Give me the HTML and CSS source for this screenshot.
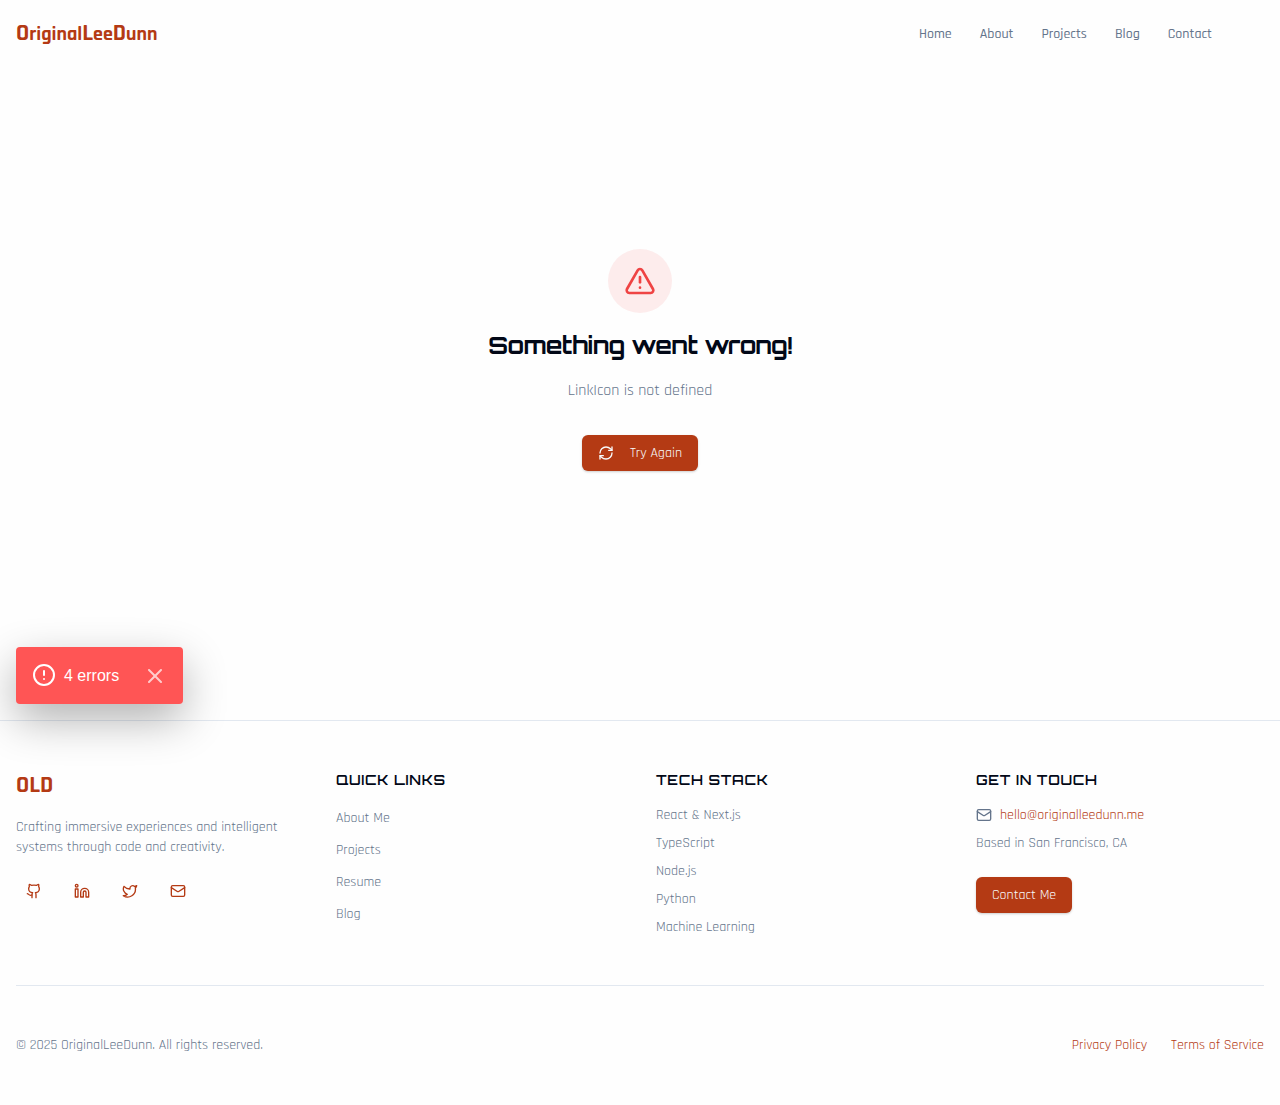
FILE: index.html
```html
<!DOCTYPE html>
<html lang="en">
<head>
<meta charset="utf-8">
<title>OriginalLeeDunn</title>
<link rel="stylesheet" href="styles.css">
</head>
<body>
<header class="header">
  <a class="logo"><span class="cap">O</span>riginal<span class="cap">L</span>ee<span class="cap">D</span>unn</a>
  <nav class="nav"><a>Home</a><a>About</a><a>Projects</a><a>Blog</a><a>Contact</a></nav>
</header>

<main class="error">
  <div class="error-badge">
    <svg class="icon icon-lg" viewBox="0 0 24 24"><path d="m21.73 18-8-14a2 2 0 0 0-3.48 0l-8 14A2 2 0 0 0 4 21h16a2 2 0 0 0 1.73-3"/><path d="M12 9v4"/><path d="M12 17h.01"/></svg>
  </div>
  <h1 class="error-title">Something went wrong!</h1>
  <p class="error-message">LinkIcon is not defined</p>
  <button class="button retry">
    <svg class="icon" viewBox="0 0 24 24"><path d="M3 12a9 9 0 0 1 9-9 9.75 9.75 0 0 1 6.74 2.74L21 8"/><path d="M21 3v5h-5"/><path d="M21 12a9 9 0 0 1-9 9 9.75 9.75 0 0 1-6.74-2.74L3 16"/><path d="M8 16H3v5"/></svg>
    <span>Try Again</span>
  </button>
</main>

<footer class="footer">
  <div class="columns">
    <section>
      <div class="brand">OLD</div>
      <p class="blurb">Crafting immersive experiences and intelligent systems through code and creativity.</p>
      <div class="social">
        <a><svg class="icon" viewBox="0 0 24 24"><path d="M15 22v-4a4.8 4.8 0 0 0-1-3.5c3 0 6-2 6-5.5.08-1.25-.27-2.48-1-3.5.28-1.15.28-2.35 0-3.5 0 0-1 0-3 1.5-2.64-.5-5.36-.5-8 0C6 2 5 2 5 2c-.3 1.15-.3 2.35 0 3.5A5.403 5.403 0 0 0 4 9c0 3.5 3 5.5 6 5.5-.39.49-.68 1.05-.85 1.65-.17.6-.22 1.23-.15 1.85v4"/><path d="M9 18c-4.51 2-5-2-7-2"/></svg></a>
        <a><svg class="icon" viewBox="0 0 24 24"><path d="M16 8a6 6 0 0 1 6 6v7h-4v-7a2 2 0 0 0-4 0v7h-4v-7a6 6 0 0 1 6-6z"/><rect width="4" height="12" x="2" y="9"/><circle cx="4" cy="4" r="2"/></svg></a>
        <a><svg class="icon" viewBox="0 0 24 24"><path d="M22 4s-.7 2.1-2 3.4c1.6 10-9.4 17.3-18 11.6 2.2.1 4.4-.6 6-2C3 15.5.5 9.6 3 5c2.2 2.6 5.6 4.1 9 4-.9-4.2 4-6.6 7-3.8 1.1 0 3-1.2 3-1.2z"/></svg></a>
        <a><svg class="icon" viewBox="0 0 24 24"><rect width="20" height="16" x="2" y="4" rx="2"/><path d="m22 7-8.97 5.7a1.94 1.94 0 0 1-2.06 0L2 7"/></svg></a>
      </div>
    </section>
    <section>
      <h2 class="heading">QUICK LINKS</h2>
      <ul class="list links"><li>About Me</li><li>Projects</li><li>Resume</li><li>Blog</li></ul>
    </section>
    <section>
      <h2 class="heading">TECH STACK</h2>
      <ul class="list"><li>React &amp; Next.js</li><li>TypeScript</li><li>Node.js</li><li>Python</li><li>Machine Learning</li></ul>
    </section>
    <section>
      <h2 class="heading">GET IN TOUCH</h2>
      <ul class="list">
        <li class="email"><svg class="icon" viewBox="0 0 24 24"><rect width="20" height="16" x="2" y="4" rx="2"/><path d="m22 7-8.97 5.7a1.94 1.94 0 0 1-2.06 0L2 7"/></svg><a>hello@originalleedunn.me</a></li>
        <li>Based in San Francisco, CA</li>
      </ul>
      <button class="button contact">Contact Me</button>
    </section>
  </div>
  <div class="legal">
    <p>© 2025 OriginalLeeDunn. All rights reserved.</p>
    <div class="legal-links"><a>Privacy Policy</a><a>Terms of Service</a></div>
  </div>
</footer>

<div class="toast">
  <svg class="icon icon-md toast-icon" viewBox="0 0 24 24"><circle cx="12" cy="12" r="10"/><path d="M12 8v4"/><path d="M12 16h.01"/></svg>
  <span>4 errors</span>
  <svg class="icon icon-md toast-close" viewBox="0 0 24 24"><path d="M18 6 6 18"/><path d="m6 6 12 12"/></svg>
</div>
</body>
</html>
```
FILE: styles.css
```css
* { box-sizing: border-box; margin: 0; padding: 0; }

body {
  position: relative;
  height: 1105px;
  display: flex;
  flex-direction: column;
  background: #fefefe;
  color: #64748b;
  font: 400 14px/20px Rajdhani, Roboto, sans-serif;
}

.icon {
  width: 16px;
  height: 16px;
  flex: none;
  fill: none;
  stroke: currentColor;
  stroke-width: 2;
  stroke-linecap: round;
  stroke-linejoin: round;
}
.icon-md { width: 24px; height: 24px; }
.icon-lg { width: 32px; height: 32px; }

.header {
  height: 68px;
  padding: 0 68px 0 16px;
  display: flex;
  align-items: center;
  justify-content: space-between;
}
.logo {
  padding-bottom: 1px;
  color: #b43a14;
  font-size: 20px;
  line-height: 28px;
  font-weight: 700;
}
.cap { font-size: 24px; }
.nav {
  display: flex;
  gap: 28px;
  font-weight: 500;
}

.error {
  height: 652px;
  padding-bottom: 68px;
  display: flex;
  flex-direction: column;
  align-items: center;
  justify-content: center;
}
.error-badge {
  width: 64px;
  height: 64px;
  display: flex;
  align-items: center;
  justify-content: center;
  border-radius: 50%;
  background: #fdecec;
  color: #ef4444;
}
.error-title {
  margin-top: 16px;
  color: #020817;
  font: 700 24px/32px Orbitron, "DejaVu Sans", sans-serif;
  letter-spacing: -0.6px;
}
.error-message {
  margin: 16px 0 32px;
  padding-top: 2px;
  font-size: 16px;
  line-height: 24px;
}

.button {
  height: 36px;
  padding: 0 16px;
  display: flex;
  align-items: center;
  justify-content: center;
  border: 0;
  border-radius: 6px;
  background: #b43a14;
  color: #f8fafc;
  box-shadow: 0 1px 3px rgba(0, 0, 0, 0.1), 0 1px 2px rgba(0, 0, 0, 0.1);
  font: inherit;
}
.retry { gap: 16px; }
.contact { margin-top: 24px; }

.footer {
  flex: 1;
  padding: 48px 16px 0;
  border-top: 1px solid #e2e8f0;
}
.columns {
  display: grid;
  grid-template-columns: repeat(4, 1fr);
  gap: 32px;
}
.brand {
  color: #b43a14;
  font-size: 24px;
  font-weight: 700;
  line-height: 32px;
}
.blurb { margin: 16px 0; }
.social { display: flex; gap: 12px; color: #b43a14; }
.social a {
  width: 36px;
  height: 36px;
  display: flex;
  align-items: center;
  justify-content: center;
}

.heading {
  margin-bottom: 14px;
  color: #020817;
  font: 600 14px/22px Orbitron, "DejaVu Sans", sans-serif;
  letter-spacing: 0.7px;
}

.list { display: flex; flex-direction: column; gap: 8px; list-style: none; }
.links li { height: 24px; padding-top: 3px; }
.email { display: flex; align-items: center; gap: 8px; }
.email a, .legal-links { color: #b43a14; }

.legal {
  margin-top: 48px;
  padding-top: 49px;
  border-top: 1px solid #e2e8f0;
  display: flex;
  justify-content: space-between;
}
.legal-links { display: flex; gap: 24px; }

.toast {
  position: absolute;
  left: 16px;
  top: 647px;
  width: 167px;
  height: 57px;
  padding: 0 16px;
  display: flex;
  align-items: center;
  gap: 8px;
  border-radius: 4px;
  background: #ff5555;
  color: #fff;
  box-shadow: 0 16px 44px rgba(0, 0, 0, 0.3);
  font: 400 16px/24px "Liberation Sans", sans-serif;
}
.toast-icon { margin-bottom: 1px; }
.toast-close { margin-left: auto; opacity: 0.7; }
```
